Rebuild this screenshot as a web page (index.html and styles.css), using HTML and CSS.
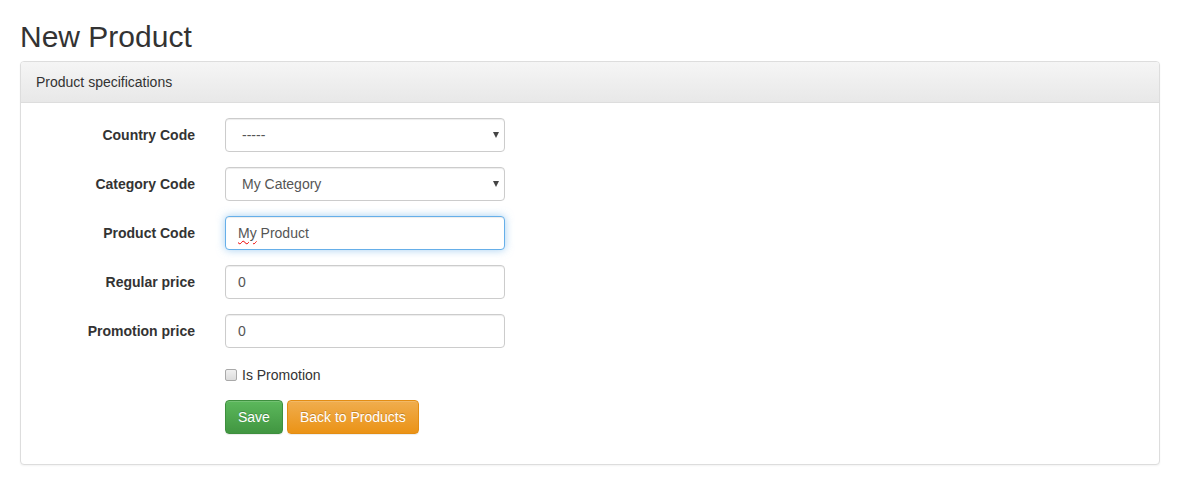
FILE: index.html
```html
<!DOCTYPE html>
<html lang="en">
<head>
<meta charset="utf-8">
<title>New Product</title>
<link rel="stylesheet" href="styles.css">
</head>
<body>
<div class="page">
  <h2 class="title">New Product</h2>
  <div class="panel">
    <div class="panel-heading">Product specifications</div>
    <div class="panel-body">
      <form class="form">
        <label class="label">Country Code</label>
        <div class="select-wrap">
          <div class="control select">-----</div>
        </div>

        <label class="label">Category Code</label>
        <div class="select-wrap">
          <div class="control select">My Category</div>
        </div>

        <label class="label">Product Code</label>
        <div class="control focused"><span class="misspelled">My</span> Product</div>

        <label class="label">Regular price</label>
        <div class="control">0</div>

        <label class="label">Promotion price</label>
        <div class="control">0</div>

        <div class="offset checkbox-row">
          <span class="checkbox"></span>
          <span class="checkbox-text">Is Promotion</span>
        </div>

        <div class="offset buttons">
          <button type="button" class="btn btn-success">Save</button>
          <button type="button" class="btn btn-warning">Back to Products</button>
        </div>
      </form>
    </div>
  </div>
</div>
</body>
</html>
```

FILE: styles.css
```css
* { box-sizing: border-box; }

html, body {
  margin: 0;
  background: #fff;
  font-family: "Liberation Sans", Arial, Helvetica, sans-serif;
  font-size: 14px;
  line-height: 20px;
  color: #333;
}

.page {
  padding: 20px 25px 20px 20px;
}

.title {
  margin: 0 0 8px;
  font-size: 30px;
  font-weight: 500;
  line-height: 33px;
  color: #333;
}

.panel {
  border: 1px solid #ddd;
  border-radius: 4px;
  background: #fff;
  box-shadow: 0 1px 2px rgba(0, 0, 0, 0.05);
}

.panel-heading {
  height: 41px;
  padding: 10px 15px;
  background: linear-gradient(to bottom, #f5f5f5 0%, #e8e8e8 100%);
  border-bottom: 1px solid #ddd;
  border-radius: 3px 3px 0 0;
  color: #333;
}

.panel-body {
  padding: 15px;
}

.form {
  display: grid;
  grid-template-columns: 159px 280px;
  column-gap: 30px;
  row-gap: 15px;
  align-items: start;
}

.label {
  padding-top: 7px;
  text-align: right;
  font-weight: bold;
  line-height: 20px;
}

.control {
  height: 34px;
  padding: 6px 12px;
  border: 1px solid #ccc;
  border-radius: 4px;
  background: #fff;
  color: #555;
  line-height: 20px;
  box-shadow: inset 0 1px 1px rgba(0, 0, 0, 0.075);
  white-space: nowrap;
}

.select {
  padding-left: 16px;
}

.select-wrap {
  position: relative;
}

.select-wrap::after {
  content: "";
  position: absolute;
  right: 6px;
  top: 14px;
  border-left: 3.5px solid transparent;
  border-right: 3.5px solid transparent;
  border-top: 6px solid #444;
}

.focused {
  border-color: #66afe9;
  box-shadow: inset 0 1px 1px rgba(0, 0, 0, 0.075), 0 0 8px rgba(102, 175, 233, 0.6);
}

.misspelled {
  text-decoration: underline wavy #e00;
  text-decoration-thickness: 1px;
  text-underline-offset: 2px;
}

.offset {
  grid-column: 2;
}

.checkbox-row {
  display: flex;
  align-items: center;
  height: 22px;
  padding-top: 2px;
  gap: 5px;
}

.checkbox {
  width: 12px;
  height: 12px;
  border: 1px solid #a9a9a9;
  border-radius: 2px;
  background: linear-gradient(to bottom, #f0f0f0, #dcdcdc);
  margin-top: -1px;
}

.checkbox-text {
  line-height: 20px;
}

.buttons {
  display: flex;
  gap: 4px;
  margin-bottom: 15px;
}

.btn {
  height: 34px;
  padding: 6px 12px;
  border: 1px solid transparent;
  border-radius: 4px;
  font-family: inherit;
  font-size: 14px;
  line-height: 20px;
  color: #fff;
  text-shadow: 0 -1px 0 rgba(0, 0, 0, 0.2);
  box-shadow: inset 0 1px 0 rgba(255, 255, 255, 0.15), 0 1px 1px rgba(0, 0, 0, 0.075);
  cursor: pointer;
}

.btn-success {
  background: linear-gradient(to bottom, #5cb85c 0%, #419641 100%);
  border-color: #3e8f3e;
}

.btn-warning {
  background: linear-gradient(to bottom, #f0ad4e 0%, #eb9316 100%);
  border-color: #e38d13;
}
```
